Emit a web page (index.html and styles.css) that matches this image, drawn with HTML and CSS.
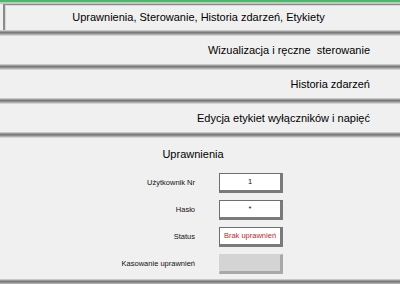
FILE: index.html
```html
<!DOCTYPE html>
<html lang="pl">
<head>
    <meta charset="UTF-8">
    <meta name="viewport" content="width=device-width, initial-scale=1.0">
    <title>Uprawnienia</title>
    <link rel="stylesheet" href="styles.css">
</head>
<body>
    <div class="topbar"></div>

    <!-- Menu główne -->
    <div class="menu">
        <div class="menu-row main"><span>Uprawnienia, Sterowanie, Historia zdarzeń, Etykiety</span></div>
        <div class="sep"></div>
        <div class="menu-row">Wizualizacja i ręczne&nbsp; sterowanie</div>
        <div class="sep"></div>
        <div class="menu-row">Historia zdarzeń</div>
        <div class="sep"></div>
        <div class="menu-row">Edycja etykiet wyłączników i napięć</div>
        <div class="sep"></div>
    </div>

    <!-- Panel uprawnień -->
    <div class="panel">
        <h2>Uprawnienia</h2>
        <div class="form">
            <div class="label">Użytkownik Nr</div>
            <div class="field">1</div>
            <div class="label">Hasło</div>
            <div class="field">*</div>
            <div class="label">Status</div>
            <div class="field status">Brak uprawnień</div>
            <div class="label">Kasowanie uprawnień</div>
            <div class="field reset"></div>
        </div>
    </div>
    <div class="sep"></div>
</body>
</html>
```

FILE: styles.css
```css
body {
    margin: 0;
    padding: 0;
    background-color: #f0f0f0;
    font-family: "Liberation Sans", Arial, sans-serif;
    color: #000;
    overflow: hidden;
}
.topbar {
    height: 2px;
    background-color: #4cb86a; /* zielony pasek */
    border-bottom: 2px solid #c4c4c4;
}
.menu-row {
    height: 28px;
    line-height: 28px;
    font-size: 11px;
    text-align: right;
    padding-right: 30px;
}
.menu-row.main {
    height: 25px;
    line-height: 25px;
    margin-left: 3px;
    padding-right: 0;
    text-align: center;
    border-top: 1px solid #8a8a8a;
    border-left: 2px solid #8a8a8a;
    box-shadow: inset 1px 1px 0 #d8d8d8;
}
.menu-row.main span {
    margin-right: 8px;
}
.sep {
    height: 6px;
    background: linear-gradient(#c8c8c8 0 1px, #9a9a9a 1px 2px, #7a7a7a 2px 3px, #8e8e8e 3px 4px, #b0b0b0 4px 5px, #d4d4d4 5px 6px);
}
.panel {
    height: 141px;
}
.panel h2 {
    margin: 0 0 0 -14px;
    padding: 9px 0 0 0;
    height: 26px;
    line-height: 14px;
    font-size: 11px;
    font-weight: normal;
    text-align: center;
}
.form {
    display: grid;
    grid-template-columns: 195px 64px;
    column-gap: 24px;
    row-gap: 7px;
    font-size: 7.5px;
}
.label {
    text-align: right;
    line-height: 20px;
    color: #111;
}
.field {
    box-sizing: border-box;
    height: 20px;
    line-height: 16px;
    text-align: center;
    white-space: nowrap;
    overflow: hidden;
    background-color: #fff;
    border: 1px solid #6e6e6e;
    border-right: 3px solid #7a7a7a;
    border-bottom: 3px solid #7a7a7a;
    color: #111;
}
.field.status {
    color: #c0282e;
}
.field.reset {
    background-color: #d4d4d4;
    border-top: 1px solid #d4d4d4;
    border-left: 1px solid #d4d4d4;
    border-right: 3px solid #a8a8a8;
    border-bottom: 3px solid #a8a8a8;
}
```
